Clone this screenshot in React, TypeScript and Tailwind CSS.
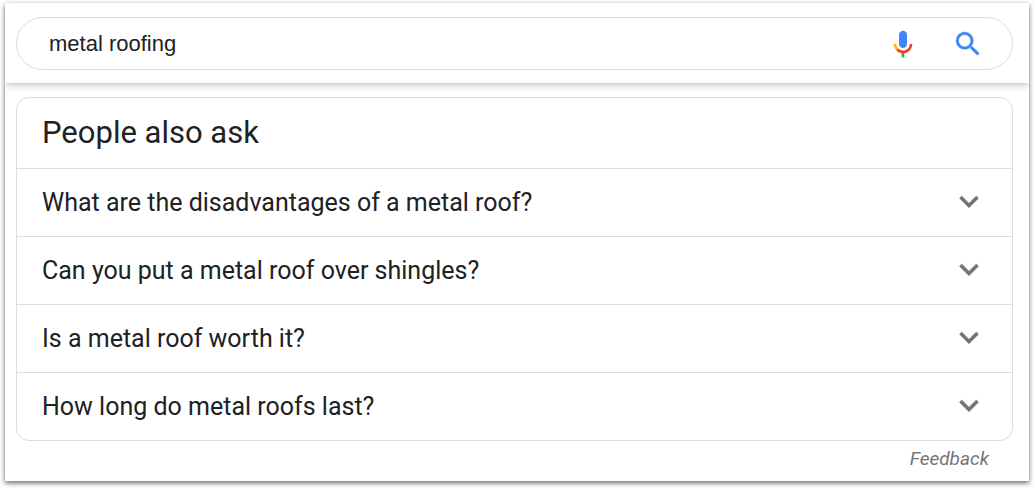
"use client";

import { useState } from "react";

const questions = [
  "What are the disadvantages of a metal roof?",
  "Can you put a metal roof over shingles?",
  "Is a metal roof worth it?",
  "How long do metal roofs last?",
];

function MicIcon() {
  return (
    <svg className="w-8 h-8" viewBox="0 0 24 24" aria-hidden="true">
      <path
        fill="#4285f4"
        d="M12 15c1.66 0 3-1.31 3-2.97V5.01C15 3.35 13.66 2 12 2S9 3.34 9 5.01v7.02C9 13.69 10.34 15 12 15z"
      />
      <path fill="#34a853" d="M11 18.08h2V22h-2z" />
      <path
        fill="#fbbc05"
        d="M7.05 16.87C5.78 15.54 5 14.04 5 12h2c0 1.45.56 2.42 1.47 3.38v.32l-1.15 1.18z"
      />
      <path
        fill="#ea4335"
        d="M12 16.93a4.97 5.25 0 0 1-3.54-1.55l-1.41 1.49C8.31 18.21 10.07 19 12 19c3.87 0 6.99-2.92 6.99-7H17c0 2.92-2.24 4.93-5 4.93z"
      />
    </svg>
  );
}

function SearchIcon() {
  return (
    <svg
      className="w-8 h-8"
      viewBox="0 0 24 24"
      fill="#4285f4"
      stroke="#4285f4"
      strokeWidth="0.3"
      aria-hidden="true"
    >
      <path d="M15.5 14h-.79l-.28-.27A6.471 6.471 0 0 0 16 9.5 6.5 6.5 0 1 0 9.5 16c1.61 0 3.09-.59 4.23-1.57l.27.28v.79l5 4.99L20.49 19l-4.99-5zm-6 0C7.01 14 5 11.99 5 9.5S7.01 5 9.5 5 14 7.01 14 9.5 11.99 14 9.5 14z" />
    </svg>
  );
}

function ChevronIcon({ open }: { open: boolean }) {
  return (
    <svg
      className={open ? "w-[38px] h-[38px] shrink-0 rotate-180" : "w-[38px] h-[38px] shrink-0"}
      viewBox="0 1 24 24"
      fill="#70757a"
      stroke="#70757a"
      strokeWidth="0.3"
      aria-hidden="true"
    >
      <path d="M16.59 8.59L12 13.17 7.41 8.59 6 10l6 6 6-6z" />
    </svg>
  );
}

export default function App() {
  const [query, setQuery] = useState("metal roofing");
  const [openIndex, setOpenIndex] = useState<number | null>(null);

  return (
    <div className="bg-white px-[5px] pt-[3px] pb-[7px] font-[Roboto,sans-serif] text-[#202124]">
      <div className="bg-white shadow-[0_2px_5px_rgba(0,0,0,0.6)]">
        <header className="pl-[11px] pr-4 pt-[14px] pb-[13px] shadow-[0_1px_8px_rgba(0,0,0,0.3)] [clip-path:inset(0_0_-20px_0)]">
          <form
            role="search"
            onSubmit={(e) => e.preventDefault()}
            className="flex items-center gap-[33px] h-[53px] pl-8 pr-7 border border-[#dadce0] rounded-full"
          >
            <input
              type="text"
              aria-label="Search"
              value={query}
              onChange={(e) => setQuery(e.target.value)}
              className="flex-1 min-w-0 bg-transparent font-['Liberation_Sans',Arial,sans-serif] text-[22px] leading-8 focus:outline-none"
            />
            <button type="button" aria-label="Search by voice">
              <MicIcon />
            </button>
            <button type="submit" aria-label="Search">
              <SearchIcon />
            </button>
          </form>
        </header>

        <main className="pl-[11px] pr-4 pt-[14px]">
          <section className="border border-[#dadce0] rounded-[13px]">
            <h2 className="flex items-center h-[70px] px-[25px] text-[31px] leading-10">
              People also ask
            </h2>
            {questions.map((question, i) => (
              <div key={question} className="border-t border-[#dadce0]">
                <button
                  type="button"
                  aria-expanded={openIndex === i}
                  onClick={() => setOpenIndex(openIndex === i ? null : i)}
                  className="flex items-center justify-between w-full min-h-[67px] pl-[25px] pr-6 text-left text-[25px] leading-8"
                >
                  {question}
                  <ChevronIcon open={openIndex === i} />
                </button>
              </div>
            ))}
          </section>
          <div className="flex justify-end px-6 pt-[6px] pb-[10px]">
            <a href="#feedback" className="text-[19px] leading-6 italic text-[#70757a]">
              Feedback
            </a>
          </div>
        </main>
      </div>
    </div>
  );
}
